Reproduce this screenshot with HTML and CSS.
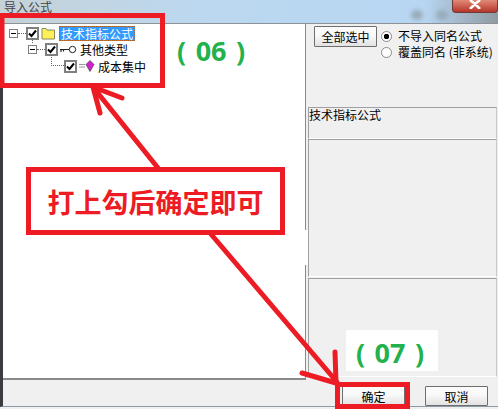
FILE: index.html
```html
<!DOCTYPE html>
<html lang="zh-CN">
<head>
    <meta charset="UTF-8">
    <title>导入公式</title>
    <link rel="stylesheet" href="styles.css">
</head>
<body>
    <div class="dialog">
        <div class="titlebar">
            <span class="title-text">导入公式</span>
            <span class="title-smudge"></span>
            <span class="title-smudge"></span>
            <span class="close-btn">
                <svg width="14" height="9" viewBox="0 0 14 9"><path d="M2 0L7 4L12 0M7 4L2 9M7 4L12 9" stroke="#fff" stroke-width="2.5" fill="none"/></svg>
            </span>
        </div>

        <div class="main">
            <div class="tree">
                <div class="tree-row row-root">
                    <span class="expander"></span>
                    <span class="dots"></span>
                    <span class="check"><svg width="9" height="9" viewBox="0 0 9 9"><path d="M1 4.5L3.5 7L8 1.5" stroke="#000" stroke-width="2" fill="none"/></svg></span>
                    <svg class="node-icon" width="15" height="13" viewBox="0 0 15 13"><path d="M1 3V1.5H5L6 3H13.5V12H1Z" fill="#ffef5a" stroke="#8a8a5a"/></svg>
                    <span class="label label-selected">技术指标公式</span>
                </div>
                <div class="tree-row row-type">
                    <span class="expander"></span>
                    <span class="dots"></span>
                    <span class="check"><svg width="9" height="9" viewBox="0 0 9 9"><path d="M1 4.5L3.5 7L8 1.5" stroke="#000" stroke-width="2" fill="none"/></svg></span>
                    <svg class="node-icon" width="17" height="9" viewBox="0 0 17 9"><path d="M0 4.5H9M1 4.5V7M3.5 4.5V6.5" stroke="#222" stroke-width="1.2" fill="none"/><circle cx="12.5" cy="4.5" r="3.2" fill="#fff" stroke="#222"/></svg>
                    <span class="label">其他类型</span>
                </div>
                <div class="tree-row row-leaf">
                    <span class="check"><svg width="9" height="9" viewBox="0 0 9 9"><path d="M1 4.5L3.5 7L8 1.5" stroke="#000" stroke-width="2" fill="none"/></svg></span>
                    <svg class="node-icon" width="16" height="12" viewBox="0 0 16 12"><path d="M0 4.5H6M0 7H6" stroke="#999" fill="none"/><path d="M11 0.5L15 4.5L11 11.5L7 4.5Z" fill="#d020d0" stroke="#444" stroke-width="0.7"/></svg>
                    <span class="label">成本集中</span>
                </div>
            </div>

            <div class="side">
                <div class="side-top">
                    <button class="win-btn select-all">全部选中</button>
                    <div class="radios">
                        <div class="radio-row"><span class="radio radio-on"></span>不导入同名公式</div>
                        <div class="radio-row"><span class="radio"></span>覆盖同名 (非系统)</div>
                    </div>
                </div>
                <div class="info-box info-name">技术指标公式</div>
                <div class="info-box info-mid"></div>
                <div class="info-box info-low"></div>
            </div>
        </div>

        <div class="footer">
            <button class="win-btn footer-btn">确定</button>
            <button class="win-btn footer-btn">取消</button>
        </div>
    </div>

    <!-- red marks drawn on top of the screenshot -->
    <svg class="marks" width="498" height="409" viewBox="0 0 498 409">
        <rect x="305" y="230" width="3" height="35" fill="#fff"/>
        <g fill="none" stroke="#ed1c24" stroke-width="5" stroke-linecap="round">
            <rect x="2" y="15.5" width="160.5" height="70" stroke-linecap="butt"/>
            <rect x="337.5" y="384.5" width="70" height="22" stroke-linecap="butt"/>
            <path d="M158 168L93 87M93 87L100 113M93 87L122 98"/>
            <path d="M210 233L337 382M335 352L336 382M302 373L336 383"/>
        </g>
    </svg>
    <div class="callout">打上勾后确定即可</div>
    <div class="step step-06">( 06 )</div>
    <div class="step step-07">( 07 )</div>
</body>
</html>
```

FILE: styles.css
```css
body {
    margin: 0;
    width: 498px;
    height: 409px;
    position: relative;
    overflow: hidden;
    font-family: "Noto Sans CJK SC", "Liberation Sans", sans-serif;
    font-size: 12px;
    color: #000;
    background: #f0f0f0;
}

.dialog {
    height: 407px;
    display: flex;
    flex-direction: column;
    box-sizing: border-box;
    border-left: 3px solid #3c3c40;
    border-bottom: 1px solid #8a9aa8;
}

.titlebar {
    height: 23px;
    margin-left: -3px;
    display: flex;
    align-items: center;
    gap: 13px;
    background: linear-gradient(to right, #c6d2d6, #bcd8f0 40%, #b8d6f2 85%, #8f9aa2);
    border-bottom: 1px solid #8d9298;
}

.title-text {
    margin-left: 4px;
    margin-right: auto;
    align-self: flex-start;
    line-height: 14px;
    color: #444;
}

.title-smudge {
    width: 12px;
    height: 10px;
    margin-top: 6px;
    background: #98acbc;
    border-radius: 6px;
    filter: blur(2px);
}

.close-btn {
    width: 46px;
    height: 13px;
    align-self: flex-start;
    margin-left: -9px;
    display: flex;
    justify-content: center;
    background: linear-gradient(#e08a78, #b8352a);
    border-radius: 0 0 4px 4px;
    border: 1px solid #6e3a36;
    border-top: none;
    box-sizing: border-box;
}

.main {
    height: 356px;
    display: flex;
}

.tree {
    width: 303px;
    box-sizing: border-box;
    background: #fff;
    border-right: 1px solid #8a8a8a;
    border-bottom: 2px solid #8a8a8a;
    padding-top: 1px;
}

.tree-row {
    height: 16.5px;
    display: flex;
    align-items: center;
    position: relative;
}

.row-root {
    padding-left: 6px;
}

.row-type {
    padding-left: 25px;
}

.row-leaf {
    padding-left: 61px;
}

.row-type::before {
    content: "";
    position: absolute;
    left: 29px;
    top: -4px;
    height: 5px;
    border-left: 1px dotted #666;
}

.row-leaf::before {
    content: "";
    position: absolute;
    left: 48px;
    top: -3px;
    width: 14px;
    height: 10px;
    border-left: 1px dotted #666;
    border-bottom: 1px dotted #666;
}

.expander {
    width: 7px;
    height: 7px;
    border: 1px solid #808080;
    background: linear-gradient(#000, #000) center / 5px 1px no-repeat #fff;
}

.dots {
    width: 8px;
    border-top: 1px dotted #666;
}

.check {
    width: 9px;
    height: 9px;
    border: 2px solid #808080;
    display: flex;
    background: #fff;
}

.node-icon {
    margin-left: 2px;
    flex-shrink: 0;
}

.label {
    margin-left: 2px;
    padding: 0 1px;
    line-height: 15px;
    white-space: nowrap;
}

.label-selected {
    margin-left: 3px;
    padding: 0 2px;
    background: #3399ff;
    color: #fff;
    outline: 1px dotted #b06020;
    outline-offset: -1px;
}

.side {
    flex: 1;
    padding-left: 2px;
    padding-right: 1px;
}

.side-top {
    height: 83px;
    display: flex;
    gap: 4px;
    padding: 2px 0 0 6px;
    box-sizing: border-box;
}

.win-btn {
    font-family: inherit;
    font-size: 12px;
    padding: 0;
    background: linear-gradient(#fafafa 40%, #e2e2e2);
    border: 1px solid #6e6e6e;
    border-radius: 1px;
}

.select-all {
    width: 63px;
    height: 21px;
}

.radios {
    padding-top: 2px;
}

.radio-row {
    height: 16px;
    line-height: 16px;
    display: flex;
    align-items: center;
    gap: 6px;
    white-space: nowrap;
}

.radio {
    width: 9px;
    height: 9px;
    border: 1px solid #8a8a8a;
    border-radius: 50%;
    background: #fff;
}

.radio-on {
    background: radial-gradient(circle, #000 2.5px, #fff 3px);
}

.info-box {
    box-sizing: border-box;
    border: 1px solid #a0a0a0;
    border-right-color: #c8c8c8;
    border-bottom-color: #fff;
    line-height: 14px;
}

.info-name {
    height: 32px;
}

.info-mid {
    height: 138px;
    margin-bottom: 1px;
}

.info-low {
    height: 99px;
}

.footer {
    flex: 1;
    display: flex;
    justify-content: flex-end;
    align-items: flex-start;
    gap: 20px;
    padding: 6px 10px 0 0;
}

.footer-btn {
    width: 63px;
    height: 20px;
}

.marks {
    position: absolute;
    top: 0;
    left: 0;
}

.callout {
    position: absolute;
    left: 26px;
    top: 167px;
    width: 259px;
    height: 68px;
    box-sizing: border-box;
    border: 5px solid #ed1c24;
    background: #fff;
    display: flex;
    align-items: center;
    justify-content: center;
    color: #ed1c24;
    font-size: 27px;
    font-weight: bold;
}

.step {
    position: absolute;
    color: #22b14c;
    font-family: "Noto Sans", sans-serif;
    font-size: 27px;
    font-weight: bold;
    line-height: 41px;
    word-spacing: 2.5px;
    white-space: pre;
}

.step-06 {
    left: 177px;
    top: 30px;
}

.step-07 {
    left: 346px;
    top: 330px;
    width: 92px;
    height: 41px;
    box-sizing: border-box;
    padding-right: 4px;
    line-height: 45px;
    text-align: center;
    background: #fff;
}
```
